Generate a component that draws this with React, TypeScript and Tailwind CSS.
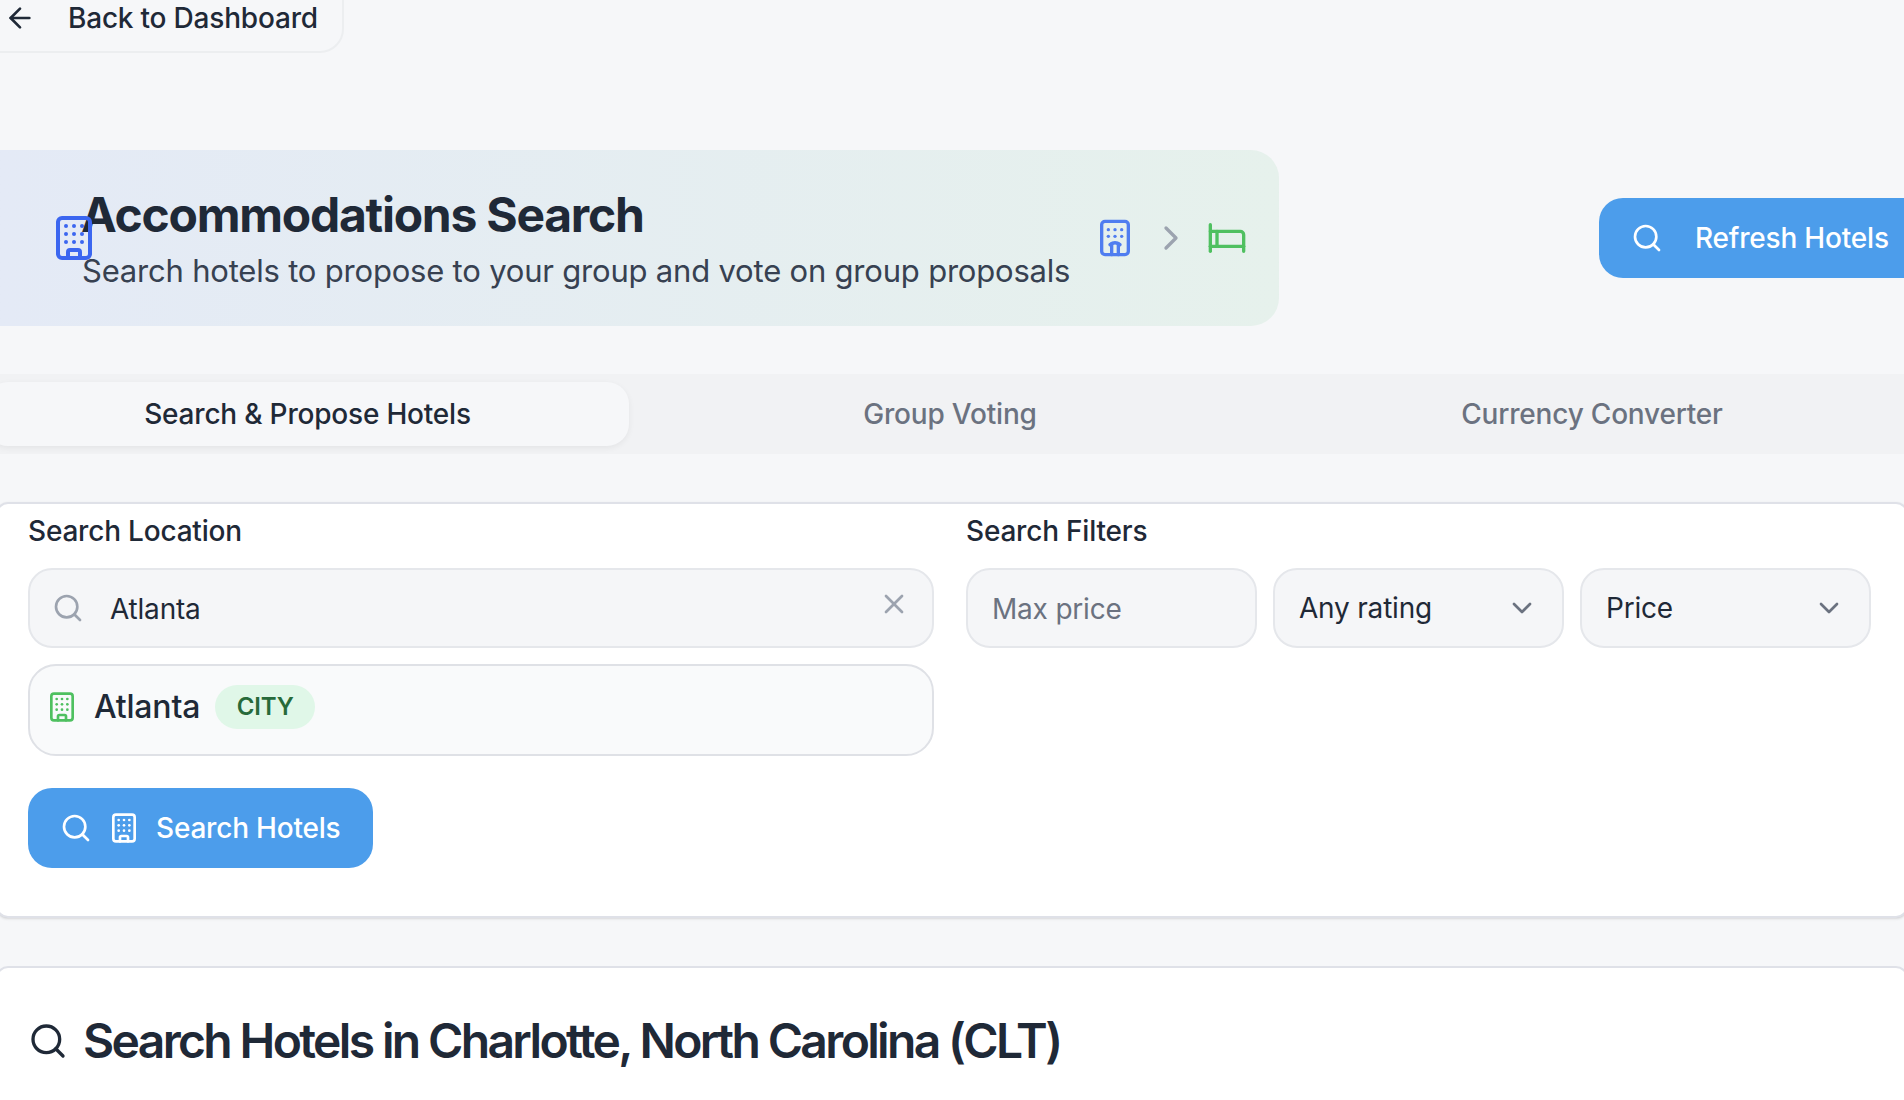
import { ArrowLeft, Bed, Building, ChevronDown, ChevronRight, Hotel, Search, X } from "lucide-react";

export default function App() {
  return (
    <div className="w-[1904px] h-[1100px] overflow-hidden bg-[#f6f7f9] text-[#1f2937] font-['Inter',sans-serif] tracking-[-0.2px]">
      {/* Back button */}
      <div className="flex items-center gap-[32px] w-[344px] h-[53px] -mb-px pl-[4px] border-2 border-t-0 border-l-0 border-[#eceef0] rounded-br-[24px]">
        <ArrowLeft size={32} strokeWidth={2} className="shrink-0 mt-[-15px]" />
        <span className="text-[28px] leading-[36px] font-medium mt-[-15px] whitespace-nowrap">Back to Dashboard</span>
      </div>

      {/* Hero row */}
      <div className="flex items-center mt-[98px] h-[176px]">
        <div className="flex items-center shrink-0 w-[1279px] h-[176px] rounded-r-[28px] bg-gradient-to-r from-[#e4eaf6] to-[#e6f1ec]">
          <Building size={48} strokeWidth={2} className="shrink-0 ml-[50px] -mr-[15px] text-[#3b66f0] relative z-10" />
          <div className="flex flex-col w-[1000px] mt-[1px]">
            <h1 className="text-[48px] leading-[56px] font-bold tracking-[-1.25px] text-[#1f2937] whitespace-nowrap -ml-[2px]">Accommodations Search</h1>
            <p className="mt-[8px] text-[31px] leading-[40px] text-[#374151] whitespace-nowrap -ml-[1px]">Search hotels to propose to your group and vote on group proposals</p>
          </div>
          <Hotel size={40} strokeWidth={2} className="shrink-0 ml-[12px] text-[#4f7df0]" />
          <ChevronRight size={40} strokeWidth={2} className="shrink-0 ml-[16px] text-[#9ca3af]" />
          <Bed size={40} strokeWidth={2} className="shrink-0 ml-[16px] text-[#4fc060]" />
        </div>
        <div className="flex items-center shrink-0 ml-[320px] w-[340px] h-[80px] pl-[32px] gap-[32px] bg-[#4c9deb] text-white rounded-[24px]">
          <Search size={32} strokeWidth={2} className="shrink-0" />
          <span className="text-[28px] font-medium whitespace-nowrap">Refresh Hotels</span>
        </div>
      </div>

      {/* Tabs */}
      <div className="flex items-center h-[80px] mt-[48px] bg-[#f1f2f4] -ml-[22px] w-[1948px] pl-[8px]">
        <div className="flex items-center justify-center w-[643px] h-[64px] bg-[#f6f7f9] rounded-[22px] shadow-[0_2px_6px_rgba(0,0,0,0.06)] text-[28px] font-medium text-[#1f2937]">Search &amp; Propose Hotels</div>
        <div className="flex items-center justify-center w-[642px] h-[64px] text-[28px] font-medium text-[#6b7280]">Group Voting</div>
        <div className="flex items-center justify-center w-[642px] h-[64px] text-[28px] font-medium text-[#6b7280]">Currency Converter</div>
      </div>

      {/* Search card */}
      <div className="-mx-[4px] w-[1912px] h-[416px] mt-[48px] bg-white border-2 border-[#dfe1e8] rounded-[12px] shadow-sm pt-[9px] pl-[30px]">
        <div className="grid grid-cols-[906px_908px] gap-x-[32px]">
          <div className="flex flex-col">
            <div className="text-[28px] leading-[36px] font-medium">Search Location</div>
            <div className="flex items-center h-[80px] mt-[19px] border-2 border-[#e5e7eb] bg-[#f5f6f8] rounded-[24px] pl-[22px] pr-[22px]">
              <Search size={32} strokeWidth={2} className="shrink-0 text-[#9ca3af]" />
              <span className="ml-[26px] mt-[2px] text-[28px] text-[#1f2937] flex-1">Atlanta</span>
              <X size={32} strokeWidth={2} className="shrink-0 text-[#9ca3af] -mt-[8px]" />
            </div>
            <div className="flex items-center h-[92px] mt-[16px] border-2 border-[#dfe1e6] bg-[#f9fafb] rounded-[28px] pl-[16px]">
              <Building size={32} strokeWidth={2} className="shrink-0 text-[#4fc060] -mt-[6px]" />
              <span className="ml-[16px] text-[32px] font-medium -mt-[6px]">Atlanta</span>
              <span className="ml-[15px] -mt-[6px] flex items-center justify-center w-[100px] h-[44px] rounded-full bg-[#e0f7e8] text-[#276a3a] text-[24px] font-semibold">CITY</span>
            </div>
            <div className="flex items-center w-[345px] h-[80px] mt-[32px] bg-[#4c9deb] text-white rounded-[24px] pl-[32px]">
              <Search size={32} strokeWidth={2} className="shrink-0" />
              <Building size={32} strokeWidth={2} className="shrink-0 ml-[16px]" />
              <span className="ml-[16px] text-[28px] font-medium whitespace-nowrap">Search Hotels</span>
            </div>
          </div>
          <div className="flex flex-col">
            <div className="text-[28px] leading-[36px] font-medium">Search Filters</div>
            <div className="flex gap-[16px] mt-[19px]">
              <div className="flex items-center shrink-0 w-[291px] h-[80px] border-2 border-[#e5e7eb] bg-[#f5f6f8] rounded-[24px] pl-[24px] text-[28px] text-[#6b7280]"><span className="mt-[2px]">Max price</span></div>
              <div className="flex items-center justify-between shrink-0 w-[291px] h-[80px] border-2 border-[#e5e7eb] bg-[#f5f6f8] rounded-[24px] pl-[24px] pr-[24px] text-[28px]">
                Any rating
                <ChevronDown size={32} strokeWidth={2} className="text-[#6b7280]" />
              </div>
              <div className="flex items-center justify-between shrink-0 w-[291px] h-[80px] border-2 border-[#e5e7eb] bg-[#f5f6f8] rounded-[24px] pl-[24px] pr-[24px] text-[28px]">
                Price
                <ChevronDown size={32} strokeWidth={2} className="text-[#6b7280]" />
              </div>
            </div>
          </div>
        </div>
      </div>

      {/* Results card */}
      <div className="-mx-[4px] w-[1912px] h-[300px] mt-[48px] bg-white border-2 border-[#dfe1e8] rounded-[12px] pl-[30px] pt-[43px]">
        <div className="flex items-center gap-[15px]">
          <Search size={40} strokeWidth={2} className="shrink-0 text-[#1f2937]" />
          <h2 className="text-[48px] leading-[60px] font-semibold tracking-[-2.65px] whitespace-nowrap">Search Hotels in Charlotte, North Carolina (CLT)</h2>
        </div>
      </div>
    </div>
  );
}
